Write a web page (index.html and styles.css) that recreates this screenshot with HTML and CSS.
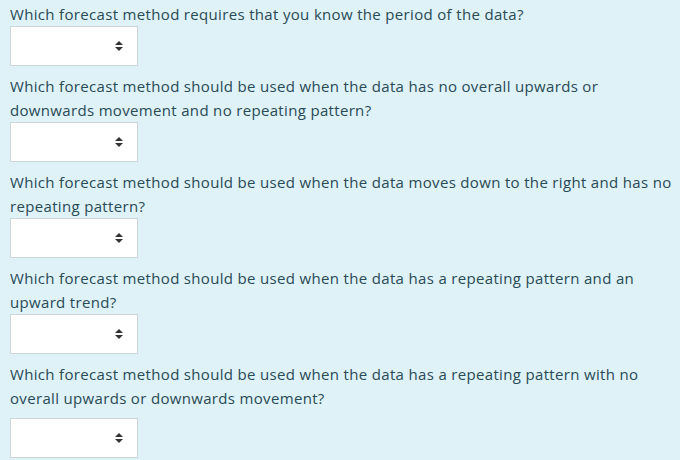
FILE: index.html
```html
<!DOCTYPE html>
<html>
<head>
<meta charset="utf-8">
<link rel="stylesheet" href="styles.css">
</head>
<body>
<div class="page">
  <div class="q">
    <div class="qtext">Which forecast method requires that you know the period of the data?</div>
    <div class="sel"><svg class="arr" width="8" height="10" viewBox="0 0 8 10"><path d="M4 0 L8 4 L0 4 Z M0 6 L8 6 L4 10 Z" fill="#333"/></svg></div>
  </div>
  <div class="q">
    <div class="qtext">Which forecast method should be used when the data has no overall upwards or downwards movement and no repeating pattern?</div>
    <div class="sel"><svg class="arr" width="8" height="10" viewBox="0 0 8 10"><path d="M4 0 L8 4 L0 4 Z M0 6 L8 6 L4 10 Z" fill="#333"/></svg></div>
  </div>
  <div class="q">
    <div class="qtext">Which forecast method should be used when the data moves down to the right and has no repeating pattern?</div>
    <div class="sel"><svg class="arr" width="8" height="10" viewBox="0 0 8 10"><path d="M4 0 L8 4 L0 4 Z M0 6 L8 6 L4 10 Z" fill="#333"/></svg></div>
  </div>
  <div class="q">
    <div class="qtext">Which forecast method should be used when the data has a repeating pattern and an upward trend?</div>
    <div class="sel"><svg class="arr" width="8" height="10" viewBox="0 0 8 10"><path d="M4 0 L8 4 L0 4 Z M0 6 L8 6 L4 10 Z" fill="#333"/></svg></div>
  </div>
  <div class="q last">
    <div class="qtext">Which forecast method should be used when the data has a repeating pattern with no overall upwards or downwards movement?</div>
    <div class="sel"><svg class="arr" width="8" height="10" viewBox="0 0 8 10"><path d="M4 0 L8 4 L0 4 Z M0 6 L8 6 L4 10 Z" fill="#333"/></svg></div>
  </div>
</div>
</body>
</html>
```
FILE: styles.css
```css
html, body {
  margin: 0;
  padding: 0;
  background: #def2f8;
}
.page {
  width: 680px;
  height: 460px;
  overflow: hidden;
  padding: 2px 0 0 10px;
  box-sizing: border-box;
  font-family: "Open Sans", "Noto Sans", sans-serif;
  font-size: 15px;
  letter-spacing: 0.33px;
  line-height: 24px;
  color: #2a4a55;
}
.q {
  display: flex;
  flex-direction: column;
  align-items: flex-start;
  margin-bottom: 8px;
}
.qtext {
  width: 666px;
}
.sel {
  width: 128px;
  height: 40px;
  box-sizing: border-box;
  background: #fff;
  border: 1px solid #ced4da;
  display: flex;
  align-items: center;
  justify-content: flex-end;
  padding-right: 14px;
}
.last .sel {
  margin-top: 8px;
}
.arr {
  display: block;
}
```
